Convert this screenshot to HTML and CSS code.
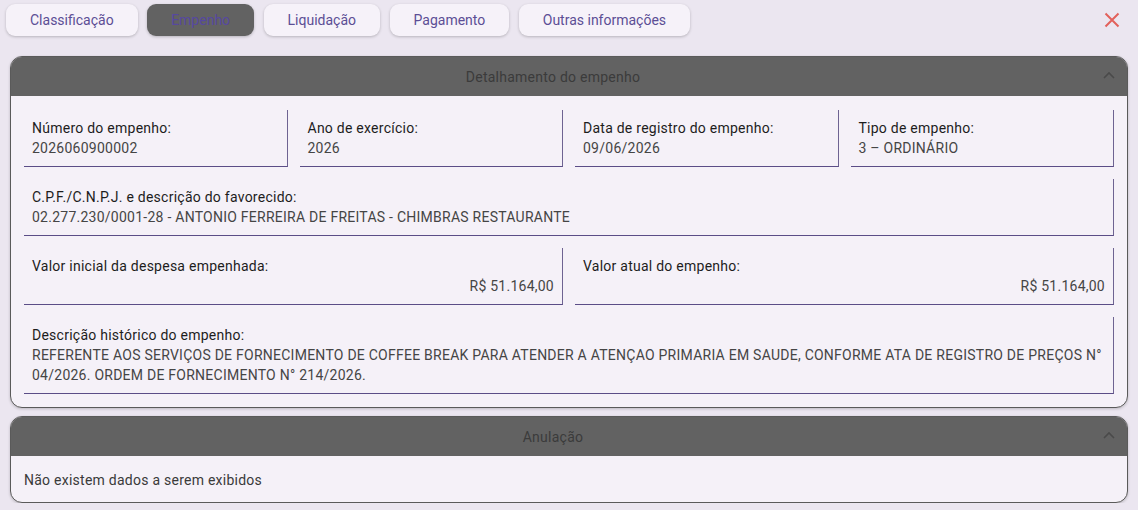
FILE: index.html
```html
<!DOCTYPE html>
<html lang="pt-BR">
<head>
<meta charset="utf-8">
<title>Empenho</title>
<link rel="stylesheet" href="styles.css">
</head>
<body>
<div class="page">
  <div class="topbar">
    <nav class="tabs">
      <button class="tab">Classificação</button>
      <button class="tab tab-active">Empenho</button>
      <button class="tab">Liquidação</button>
      <button class="tab">Pagamento</button>
      <button class="tab">Outras informações</button>
    </nav>
    <button class="close" aria-label="Fechar">
      <svg width="16" height="16" viewBox="0 0 16 16"><path d="M1.5 1.5 L14.5 14.5 M14.5 1.5 L1.5 14.5" stroke="#e2615c" stroke-width="2" fill="none"/></svg>
    </button>
  </div>

  <section class="panel">
    <header class="panel-head">
      <span class="panel-title">Detalhamento do empenho</span>
      <svg class="chevron" width="12" height="8" viewBox="0 0 12 8"><path d="M1 7 L6 2 L11 7" stroke="#4a4a4a" stroke-width="1.6" fill="none"/></svg>
    </header>
    <div class="panel-body">
      <div class="row row-4">
        <div class="field"><div class="label">Número do empenho:</div><div class="value">2026060900002</div></div>
        <div class="field"><div class="label">Ano de exercício:</div><div class="value">2026</div></div>
        <div class="field"><div class="label">Data de registro do empenho:</div><div class="value">09/06/2026</div></div>
        <div class="field"><div class="label">Tipo de empenho:</div><div class="value">3 – ORDINÁRIO</div></div>
      </div>
      <div class="row">
        <div class="field"><div class="label">C.P.F./C.N.P.J. e descrição do favorecido:</div><div class="value">02.277.230/0001-28 - ANTONIO FERREIRA DE FREITAS - CHIMBRAS RESTAURANTE</div></div>
      </div>
      <div class="row row-2">
        <div class="field"><div class="label">Valor inicial da despesa empenhada:</div><div class="value value-right">R$ 51.164,00</div></div>
        <div class="field"><div class="label">Valor atual do empenho:</div><div class="value value-right">R$ 51.164,00</div></div>
      </div>
      <div class="row">
        <div class="field"><div class="label">Descrição histórico do empenho:</div><div class="value">REFERENTE AOS SERVIÇOS DE FORNECIMENTO DE COFFEE BREAK PARA ATENDER A ATENÇAO PRIMARIA EM SAUDE, CONFORME ATA DE REGISTRO DE PREÇOS N° 04/2026. ORDEM DE FORNECIMENTO N° 214/2026.</div></div>
      </div>
    </div>
  </section>

  <section class="panel">
    <header class="panel-head">
      <span class="panel-title">Anulação</span>
      <svg class="chevron" width="12" height="8" viewBox="0 0 12 8"><path d="M1 7 L6 2 L11 7" stroke="#4a4a4a" stroke-width="1.6" fill="none"/></svg>
    </header>
    <div class="panel-body panel-empty">Não existem dados a serem exibidos</div>
  </section>
</div>
</body>
</html>
```

FILE: styles.css
```css
* { box-sizing: border-box; }

html, body {
  margin: 0;
  background: #ebe6f0;
  font-family: Roboto, "Noto Sans", sans-serif;
  font-size: 14px;
  letter-spacing: 0.25px;
  color: #1f1f1f;
}

.page {
  padding: 4px 10px 0 6px;
}

.topbar {
  display: flex;
  align-items: center;
  justify-content: space-between;
  height: 32px;
}

.tabs {
  display: flex;
  gap: 9.5px;
}

.tab {
  height: 32px;
  padding: 0 24px;
  border: none;
  border-radius: 9px;
  background: #f6f2f9;
  color: #5c4e95;
  font-family: inherit;
  font-size: 14px;
  letter-spacing: 0;
  box-shadow: 0 1px 3px rgba(0, 0, 0, 0.22);
  cursor: pointer;
}

.tab-active {
  background: #626262;
  color: #5648a0;
}

.close {
  border: none;
  background: none;
  padding: 0;
  width: 20px;
  height: 20px;
  display: flex;
  align-items: center;
  justify-content: center;
  margin-right: 6px;
}

.panel {
  margin: 20px 0 0 4px;
  border: 1px solid #5a5a5a;
  border-radius: 12px;
  background: #f5f1f8;
  overflow: hidden;
  box-shadow: 0 1px 3px rgba(0, 0, 0, 0.2);
}

.panel + .panel {
  margin-top: 8px;
}

.panel-head {
  height: 39px;
  padding-right: 32px;
  background: #626262;
  display: flex;
  align-items: center;
  justify-content: center;
  position: relative;
}

.panel-title {
  color: #3b3b3b;
  font-size: 14px;
}

.chevron {
  position: absolute;
  right: 12px;
  top: 14px;
}

.panel-body {
  padding: 14px 13px 13px 13px;
  display: flex;
  flex-direction: column;
  gap: 12px;
}

.row {
  display: grid;
  grid-template-columns: 1fr;
  gap: 12px;
}

.row-4 { grid-template-columns: repeat(4, 1fr); }
.row-2 { grid-template-columns: repeat(2, 1fr); }

.field {
  padding: 8px 8px 8px 8px;
  border-right: 1px solid #6e6392;
  border-bottom: 1px solid #5b4d87;
  line-height: 20px;
}

.label {
  color: #1d1d1d;
}

.value {
  color: #454545;
}

.value-right {
  text-align: right;
}

.panel-empty {
  display: block;
  padding: 14px 13px 12px 13px;
  line-height: 20px;
  color: #3a3a3a;
}
```
